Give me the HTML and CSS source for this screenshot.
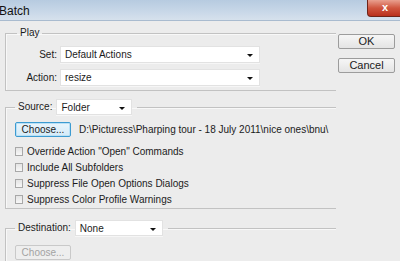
FILE: index.html
```html
<!DOCTYPE html>
<html lang="en">
<head>
    <meta charset="UTF-8">
    <title>Batch</title>
    <link rel="stylesheet" href="styles.css">
</head>
<body>
    <div class="titlebar">
        <span class="title">Batch</span>
        <div class="close">x</div>
    </div>

    <div class="main">
        <div class="left">
            <fieldset class="group play">
                <legend>Play</legend>
                <div class="row">
                    <label class="row-label">Set:</label>
                    <div class="dropdown wide">Default Actions</div>
                </div>
                <div class="row">
                    <label class="row-label">Action:</label>
                    <div class="dropdown wide">resize</div>
                </div>
            </fieldset>

            <fieldset class="group source">
                <legend>
                    <span>Source:</span>
                    <div class="dropdown source-drop">Folder</div>
                </legend>
                <div class="choose-row">
                    <button class="btn choose focused">Choose...</button>
                    <span class="path">D:\Picturess\Pharping tour - 18 July 2011\nice ones\bnu\</span>
                </div>
                <div class="check"><span class="box"></span>Override Action "Open" Commands</div>
                <div class="check"><span class="box"></span>Include All Subfolders</div>
                <div class="check"><span class="box"></span>Suppress File Open Options Dialogs</div>
                <div class="check"><span class="box"></span>Suppress Color Profile Warnings</div>
            </fieldset>

            <fieldset class="group dest">
                <legend>
                    <span>Destination:</span>
                    <div class="dropdown dest-drop">None</div>
                </legend>
                <button class="btn choose" disabled>Choose...</button>
            </fieldset>
        </div>

        <div class="side">
            <button class="btn side-btn">OK</button>
            <button class="btn side-btn">Cancel</button>
        </div>
    </div>
</body>
</html>
```

FILE: styles.css
```css
* {
    margin: 0;
    padding: 0;
    box-sizing: border-box;
}

body {
    width: 400px;
    height: 261px;
    overflow: hidden;
    background: #ececec;
    font-family: "Liberation Sans", Arial, sans-serif;
    font-size: 10px;
    color: #1b1b1b;
}

/* window title */
.titlebar {
    height: 21px;
    display: flex;
    align-items: flex-start;
    background: linear-gradient(#b7cbe0 0%, #c9d8e8 60%, #d6e1ec 100%);
    border-bottom: 1px solid #a9bbcf;
}

.title {
    margin-left: -1px;
    padding-top: 4px;
    font-size: 12px;
    color: #111;
}

.close {
    margin-left: auto;
    width: 36px;
    height: 17px;
    margin-right: -3px;
    background: linear-gradient(#e9a08f 0%, #d0563f 50%, #b9301c 100%);
    border: 1px solid #6e2418;
    border-top: none;
    border-radius: 0 0 0 4px;
    color: #fff;
    font-weight: bold;
    font-size: 11px;
    text-align: center;
    line-height: 14px;
}

.main {
    display: flex;
    padding: 6px 0 0 5px;
}

.left {
    width: 331px;
}

/* group boxes */
.group {
    border: 1px solid #c2c2c2;
    border-right: none;
    box-shadow: inset 1px 1px 0 #f8f8f8;
}

.group legend {
    display: flex;
    align-items: center;
    gap: 4px;
    margin-left: 11px;
    padding: 0 3px;
    line-height: 12px;
}

.play {
    padding: 7px 0 4px 0;
}

.row {
    display: flex;
    align-items: center;
}

.row + .row {
    margin-top: 6px;
}

.row-label {
    width: 51px;
    text-align: right;
    margin-right: 3px;
}

.dropdown {
    position: relative;
    height: 17px;
    line-height: 15px;
    padding-left: 4px;
    background: #fff;
    border: 1px solid #e2e2e2;
    box-shadow: 0 1px 0 #f6f6f6;
}

.dropdown::after {
    content: "";
    position: absolute;
    right: 6px;
    top: 7px;
    border-left: 3px solid transparent;
    border-right: 3px solid transparent;
    border-top: 3px solid #111;
}

.wide {
    width: 200px;
}

.source {
    margin-top: 8px;
    padding: 7px 0 1px 9px;
}

.source legend,
.dest legend {
    margin-left: 0;
    padding: 0 5px 0 3px;
}

.source-drop {
    width: 76px;
    height: 16px;
}

.dest-drop {
    width: 88px;
    height: 16px;
}

.choose-row {
    display: flex;
    align-items: center;
    margin-bottom: 6px;
}

.btn {
    font-family: inherit;
    font-size: 10px;
    color: #1b1b1b;
    background: linear-gradient(#f6f6f6, #e4e4e4);
    border: 1px solid #9c9c9c;
    border-radius: 2px;
}

.choose {
    width: 56px;
    height: 15px;
    line-height: 13px;
}

.choose.focused {
    border-color: #3d9bd1;
    background: linear-gradient(#eaf5fc, #d4ebf8);
    box-shadow: inset 0 0 0 1px #b9e0f6;
}

.choose:disabled {
    color: #a3a3a3;
    border-color: #c9c9c9;
    background: #eeeeee;
}

.path {
    margin-left: 8px;
    white-space: nowrap;
}

.check {
    height: 16px;
    display: flex;
    align-items: center;
}

.box {
    width: 8px;
    height: 9px;
    margin-right: 4px;
    background: linear-gradient(#e4e4e4, #f7f7f7);
    border: 1px solid #a8a8a8;
}

.dest {
    margin-top: 11px;
    height: 43px;
    border-bottom: none;
    padding: 9px 0 0 9px;
}

/* OK / Cancel */
.side {
    display: flex;
    flex-direction: column;
    gap: 9px;
    margin-left: 2px;
    padding-top: 7px;
}

.side-btn {
    width: 57px;
    height: 15px;
    line-height: 13px;
    font-size: 11px;
}
```
